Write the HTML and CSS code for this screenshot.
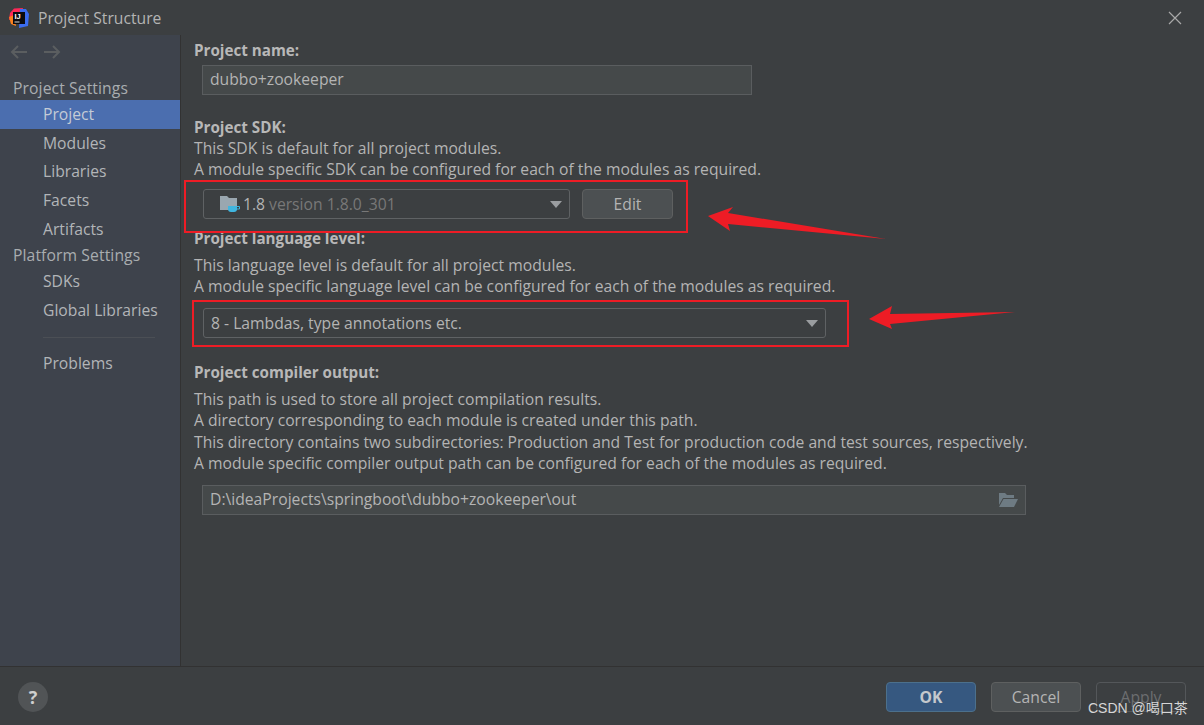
FILE: index.html
```html
<!DOCTYPE html>
<html lang="en">
<head>
<meta charset="utf-8">
<title>Project Structure</title>
<link rel="stylesheet" href="styles.css">
</head>
<body>
<div class="dialog">
  <header class="titlebar">
    <svg class="logo" width="20" height="20" viewBox="0 0 20 20">
      <path d="M1 5 L5 0.500 L14 0 L12 8 L0 12Z" fill="#fe2857"/>
      <path d="M11 1 L17 1 L20 6 L19 18 L10 20Z" fill="#3b6cf0"/>
      <path d="M0 9 L5 7 L7 18 L2 16Z" fill="#fc801d"/>
      <rect x="4" y="4" width="12" height="12" fill="#0b0b0f"/>
      <text x="5.500" y="10.500" class="logo-text">IJ</text>
      <rect x="5.500" y="13.500" width="5" height="1" fill="#ddd"/>
    </svg>
    <span class="title">Project Structure</span>
    <svg class="close" width="14" height="14" viewBox="0 0 14 14"><path d="M1 1 L13 13 M13 1 L1 13" stroke="#a8a8a8" stroke-width="1.200" fill="none"/></svg>
  </header>
  <div class="main">
    <nav class="sidebar">
      <div class="history">
        <svg width="18" height="14" viewBox="0 0 18 14"><path d="M17 7H2M8 1L2 7l6 6" stroke="#5b5e60" stroke-width="2" fill="none"/></svg>
        <svg width="18" height="14" viewBox="0 0 18 14"><path d="M1 7h15M10 1l6 6-6 6" stroke="#5b5e60" stroke-width="2" fill="none"/></svg>
      </div>
      <div class="group">Project Settings</div>
      <div class="item selected">Project</div>
      <div class="item">Modules</div>
      <div class="item">Libraries</div>
      <div class="item">Facets</div>
      <div class="item">Artifacts</div>
      <div class="group group-second">Platform Settings</div>
      <div class="item">SDKs</div>
      <div class="item">Global Libraries</div>
      <div class="separator"></div>
      <div class="item">Problems</div>
    </nav>
    <main class="content">
      <h2 class="label first">Project name:</h2>
      <div class="field name-field">dubbo+zookeeper</div>

      <h2 class="label sdk-label">Project SDK:</h2>
      <p class="text">This SDK is default for all project modules.</p>
      <p class="text">A module specific SDK can be configured for each of the modules as required.</p>
      <div class="sdk-row">
        <div class="combo sdk-combo">
          <svg class="sdk-icon" width="20" height="20" viewBox="0 0 20 20">
            <path d="M0 2h7l2 2h8v12H0Z" fill="#9aa7b0"/>
            <path d="M8 12h9v3a3 3 0 0 1-3 3h-3a3 3 0 0 1-3-3Z" fill="#40b6e0"/>
            <path d="M17 12.500h2.500v2.500H17" stroke="#40b6e0" fill="none"/>
          </svg>
          <span>1.8</span><span class="muted">version 1.8.0_301</span>
          <i class="caret"></i>
        </div>
        <div class="button edit">Edit</div>
      </div>

      <h2 class="label level-label">Project language level:</h2>
      <p class="text level-text">This language level is default for all project modules.</p>
      <p class="text">A module specific language level can be configured for each of the modules as required.</p>
      <div class="combo level-combo">8 - Lambdas, type annotations etc.<i class="caret"></i></div>

      <h2 class="label output-label">Project compiler output:</h2>
      <p class="text output-text">This path is used to store all project compilation results.</p>
      <p class="text">A directory corresponding to each module is created under this path.</p>
      <p class="text">This directory contains two subdirectories: Production and Test for production code and test sources, respectively.</p>
      <p class="text">A module specific compiler output path can be configured for each of the modules as required.</p>
      <div class="field output-field">
        <span>D:\ideaProjects\springboot\dubbo+zookeeper\out</span>
        <svg width="20" height="16" viewBox="0 0 20 16"><path d="M1 1h6l2 2h7v3H5L1 13Z" fill="#6e7b83"/><path d="M5.500 7H20l-4 8H1Z" fill="#6e7b83"/></svg>
      </div>
    </main>
  </div>
  <footer class="footer">
    <div class="help">?</div>
    <div class="actions">
      <div class="button primary">OK</div>
      <div class="button">Cancel</div>
      <div class="button disabled">Apply</div>
    </div>
  </footer>
  <div class="mark mark-sdk"></div>
  <div class="mark mark-level"></div>
  <svg class="arrows" width="1204" height="725" viewBox="0 0 1204 725">
    <path d="M708 216 L733 207 L728 213 L886 239 L728 224 L730 231 Z" fill="#ee1c25"/>
    <path d="M869 319 L892 306 L890 314 L1015 312 L890 324 L892 329 Z" fill="#ee1c25"/>
  </svg>
  <div class="watermark">CSDN @喝口茶</div>
</div>
</body>
</html>
```
FILE: styles.css
```css
* { box-sizing: border-box; }
html, body { margin: 0; padding: 0; }
body { background: #3c3f41; }
.dialog {
  position: relative;
  width: 1204px;
  height: 725px;
  overflow: hidden;
  display: flex;
  flex-direction: column;
  background: #3c3f41;
  color: #bbbbbb;
  font: 15.7px/22px "Open Sans", "Noto Sans", sans-serif;
}
.titlebar {
  height: 35px;
  flex: none;
  display: flex;
  align-items: center;
  padding: 0 22px 0 9px;
  background: #3c3f41;
}
.logo { flex: none; margin-right: 9px; }
.logo-text { font: bold 7.500px "Liberation Sans", sans-serif; fill: #fff; }
.title { flex: 1; color: #b4b4b4; }
.main { flex: 1; display: flex; min-height: 0; }
.sidebar {
  width: 181px;
  flex: none;
  background: #3e434c;
  border-right: 1px solid #323232;
  display: flex;
  flex-direction: column;
}
.history {
  height: 41px;
  padding: 10px 0 0 10px;
  display: flex;
  gap: 15px;
  align-items: flex-start;
}
.group { height: 24px; padding-left: 13px; line-height: 24px; color: #a9adb0; letter-spacing: 0.1px; }
.group-second { height: 24px; line-height: 24px; }
.item { height: 28.700px; padding-left: 43px; line-height: 29.500px; color: #b2b5b8; }
.item.selected { background: #4b6eaf; color: #c4cbd6; }
.separator { height: 1px; margin: 12px 25px 11px 43px; background: #4b4f55; }
.content { flex: 1; padding: 4px 0 0 13px; min-width: 0; }
.label { margin: 0; font-size: 15.2px; font-weight: 700; color: #b8b8b8; line-height: 22px; }
.first { margin-top: 0; }
.text { margin: 0; line-height: 21.500px; color: #b4b4b4; white-space: nowrap; }
.field {
  border: 1px solid #5a5d5f;
  background: #45494a;
  height: 30px;
  line-height: 27px;
  padding: 0 7px;
  margin-left: 8px;
  color: #b4b4b4;
}
.name-field { width: 550px; margin-top: 4px; }
.sdk-label { margin-top: 20.900px; }
.sdk-row { display: flex; gap: 12px; margin: 8.100px 0 0 9px; }
.combo {
  position: relative;
  display: flex;
  align-items: center;
  height: 30px;
  border: 1px solid #5f6264;
  border-radius: 3px;
  background: #3c3f41;
  color: #b4b4b4;
}
.sdk-combo { width: 367px; padding-left: 16px; }
.sdk-icon { margin-right: 3px; }
.muted { color: #787878; margin-left: 4px; }
.caret {
  position: absolute;
  right: 7px;
  top: 11px;
  width: 0;
  height: 0;
  border-left: 6px solid transparent;
  border-right: 6px solid transparent;
  border-top: 7px solid #9a9da0;
}
.button {
  width: 90px;
  height: 30px;
  line-height: 28px;
  text-align: center;
  border: 1px solid #5e6060;
  border-radius: 4px;
  background: #4c5052;
  color: #b4b4b4;
}
.edit { width: 91px; }
.level-label { margin-top: 8px; }
.level-text { margin-top: 6px; }
.level-combo { width: 623px; margin: 10px 0 0 9px; padding-left: 7px; }
.output-label { margin-top: 23px; }
.output-text { margin-top: 5.900px; }
.output-field {
  width: 824px;
  margin-top: 10.100px;
  display: flex;
  justify-content: space-between;
  align-items: center;
  padding-right: 7px;
}
.footer {
  height: 59px;
  flex: none;
  border-top: 1px solid #323232;
  display: flex;
  justify-content: space-between;
  align-items: center;
  padding: 1px 18px 0;
}
.help {
  width: 30px;
  height: 30px;
  border-radius: 50%;
  background: #515456;
  color: #cfcfcf;
  text-align: center;
  font-weight: 700;
  font-size: 18px;
  line-height: 30px;
}
.actions { display: flex; gap: 15px; }
.primary { background: #365880; border-color: #4c708c; color: #c4c8cc; font-weight: 700; }
.disabled { background: transparent; border-color: #54575a; color: #6c6e70; }
.mark { position: absolute; border: 2px solid #ee1c25; }
.mark-sdk { left: 184px; top: 180px; width: 504px; height: 53px; }
.mark-level { left: 192px; top: 300px; width: 657px; height: 47px; }
.arrows { position: absolute; left: 0; top: 0; pointer-events: none; }
.watermark {
  position: absolute;
  left: 1088px;
  top: 698px;
  color: #d6d6d6;
  font: 14px/20px "Liberation Sans", "Noto Sans CJK SC", sans-serif;
  white-space: nowrap;
}
```
